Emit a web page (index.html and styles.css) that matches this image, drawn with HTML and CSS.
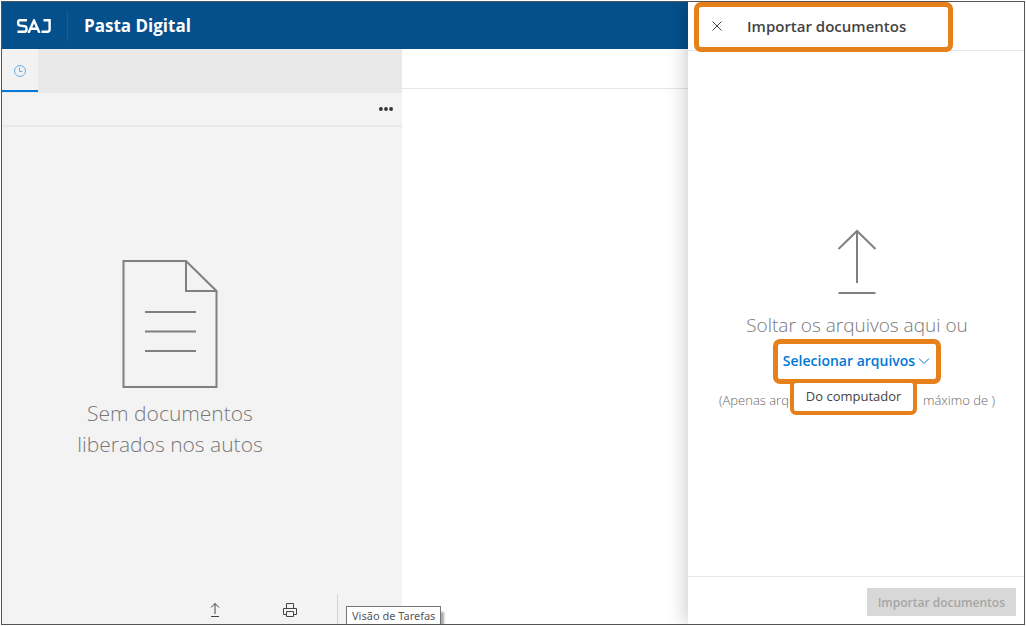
FILE: index.html
```html
<!DOCTYPE html>
<html lang="pt-BR">
<head>
<meta charset="utf-8">
<meta name="viewport" content="width=device-width, initial-scale=1">
<title>Pasta Digital</title>
<link rel="stylesheet" href="styles.css">
</head>
<body>
<div class="app">
  <div class="workspace">
    <header class="topbar">
      <svg class="logo" width="34" height="14" viewBox="0 0 34 14" role="img" aria-label="SAJ">
        <path d="M10 1.2H2.8Q1.2 1.2 1.2 3V4.6Q1.2 6.4 3 6.6L8 7.2Q9.5 7.4 9.5 9V10.8Q9.5 12.7 7.6 12.7H.5M11.5 14L17 1.5L22.5 14M14 9.7H20M26.5 1.2H32.6V10.5Q32.6 12.7 30.4 12.7H24.5"/>
      </svg>
      <h1 class="title">Pasta Digital</h1>
    </header>
    <div class="columns">
      <section class="sidebar">
        <nav class="tabs">
          <button class="tab" type="button" aria-label="Recentes">
            <svg width="14" height="14" viewBox="0 0 14 14"><circle cx="7" cy="7" r="5.500"/><path d="M6.500 3.500V7.500H9.500"/></svg>
          </button>
        </nav>
        <div class="toolbar">
          <button class="more" type="button" aria-label="Mais opções">
            <svg width="16" height="4" viewBox="0 0 16 4"><circle cx="2.900" cy="2" r="1.900"/><circle cx="8" cy="2" r="1.900"/><circle cx="13.100" cy="2" r="1.900"/></svg>
          </button>
        </div>
        <div class="empty">
          <svg width="96" height="128" viewBox="0 0 96 128"><path d="M64 1H1.500V127H94.500V31ZM64 1V31H95M23 52H74M23 71.500H74M23 91H74"/></svg>
          <p class="empty-text">Sem documentos<br>liberados nos autos</p>
        </div>
        <div class="actions">
          <button class="action" type="button" aria-label="Importar">
            <svg width="16" height="16" viewBox="0 0 16 16"><path d="M8 12V1.500M4 5.500L8 1.500L12 5.500M4 14.500H12"/></svg>
          </button>
          <button class="action" type="button" aria-label="Imprimir">
            <svg width="16" height="16" viewBox="0 0 16 16"><path d="M4.500 6.500V1.500H11.500V6.500M4.500 12.500H1.500V6.500H14.500V12.500H11.500M4.500 9.500H11.500V14.500H4.500Z"/></svg>
          </button>
          <div class="task-slot">
            <span class="tooltip" role="tooltip">Visão de Tarefas</span>
          </div>
        </div>
      </section>
      <main class="viewer"><div class="viewer-bar"></div></main>
    </div>
  </div>
  <aside class="panel">
    <header class="panel-head">
      <div class="panel-heading">
        <button class="close" type="button" aria-label="Fechar">
          <svg width="10" height="10" viewBox="0 0 10 10"><path d="M.5 .5L9.500 9.500M9.500 .5L.5 9.500"/></svg>
        </button>
        <h2 class="panel-title">Importar documentos</h2>
      </div>
    </header>
    <div class="dropzone">
      <svg class="upload" width="40" height="66" viewBox="0 0 40 66"><path d="M20 54V2M1.500 20L20 2L38.500 20M1.500 64H38.500"/></svg>
      <p class="drop-text">Soltar os arquivos aqui ou</p>
      <div class="picker">
        <button class="select" type="button" aria-haspopup="menu" aria-expanded="true">Selecionar arquivos
          <svg width="12" height="8" viewBox="0 0 12 8"><path d="M1 1.500L6 6.500L11 1.500"/></svg>
        </button>
        <div class="menu" role="menu"><button class="menu-item" type="button" role="menuitem">Do computador</button></div>
      </div>
      <p class="hint"><span>(Apenas arquivos</span><span>máximo de )</span></p>
    </div>
    <footer class="panel-foot"><button class="submit" type="button" disabled>Importar documentos</button></footer>
  </aside>
</div>
</body>
</html>
```
FILE: styles.css
```css
* { box-sizing: border-box; }
body {
  margin: 0;
  padding: 1px;
  background: #fff;
  font-family: "Open Sans", "Noto Sans", sans-serif;
  font-size: 13px;
  color: #444;
}
h1, h2, p { margin: 0; }
button { margin: 0; padding: 0; border: 0; background: none; font: inherit; color: inherit; }
svg { display: block; fill: none; stroke: currentColor; }
.app {
  display: flex;
  height: calc(100vh - 2px);
  border: 1px solid #555;
  overflow: hidden;
}
.workspace { flex: 1; min-width: 0; display: flex; flex-direction: column; }
.topbar { display: flex; align-items: center; height: 47px; background: #04508c; color: #fff; }
.logo { margin: 0 16px 0 15px; stroke-width: 2.4; }
.title {
  padding-left: 16px;
  border-left: 1px solid #0861a8;
  font-size: 17px;
  line-height: 30px;
  font-weight: 700;
}
.columns { flex: 1; display: flex; min-height: 0; }
.sidebar { flex: 0 0 400px; display: flex; flex-direction: column; background: #f3f3f3; }
.tabs { display: flex; height: 44px; padding-bottom: 1px; background: #e9e9e9; }
.tab {
  display: grid;
  place-items: center;
  width: 36px;
  padding-top: 2px;
  background: #f2f2f2;
  border-bottom: 2px solid #0078d7;
  color: #69aee5;
}
.toolbar {
  display: flex;
  align-items: center;
  justify-content: flex-end;
  height: 34px;
  padding-right: 8px;
  border-bottom: 2px solid #e9e9e9;
}
.more svg { fill: #333; stroke: none; }
.empty {
  flex: 1;
  display: flex;
  flex-direction: column;
  align-items: center;
  justify-content: center;
  gap: 10px;
  padding: 0 64px 2px 0;
  color: #808080;
}
.empty svg { stroke-width: 2; }
.empty-text { font-size: 21px; line-height: 31px; font-weight: 300; text-align: center; color: #777; }
.actions { display: flex; justify-content: flex-end; height: 30px; }
.action { display: grid; place-items: center; width: 75px; padding-top: 2px; }
.action + .action { margin-right: 10px; }
.task-slot { position: relative; width: 65px; border-left: 1px solid #d4d4d4; }
.tooltip {
  position: absolute;
  top: 12px;
  left: 8px;
  padding: 0 5px;
  border: 1px solid #767676;
  background: #fff;
  box-shadow: 3px 6px 2px #aaa;
  font-family: "Noto Sans", sans-serif;
  font-size: 11px;
  line-height: 18px;
  white-space: nowrap;
  color: #575757;
}
.viewer { flex: 1; }
.viewer-bar { height: 40px; border-bottom: 1px solid #e6e6e6; }
.panel {
  position: relative;
  flex: 0 0 336px;
  display: flex;
  flex-direction: column;
  background: #fff;
  box-shadow: 0 0 20px rgba(0, 0, 0, .25);
}
.panel-head { height: 49px; border-bottom: 1px solid #e6e6e6; }
.panel-heading {
  position: relative;
  display: flex;
  align-items: center;
  gap: 25px;
  width: 259px;
  height: 50px;
  margin-left: 6px;
  padding: 0 12px 3px 13px;
  border: 5px solid #e5801b;
  border-radius: 7px;
}
.close svg { stroke-width: 1; }
.panel-title { font-size: 15px; line-height: 24px; font-weight: 600; white-space: nowrap; }
.dropzone {
  flex: 1;
  display: flex;
  flex-direction: column;
  align-items: center;
  justify-content: center;
  padding: 11px 0 0 2px;
}
.upload { color: #808080; stroke-width: 2; }
.drop-text { margin-top: 16px; font-size: 19px; line-height: 28px; font-weight: 300; color: #777; }
.picker { position: relative; }
.select {
  display: flex;
  align-items: center;
  gap: 3px;
  height: 45px;
  padding: 0 6px 0 5px;
  border: 5px solid #e5801b;
  border-radius: 7px;
  background: #fff;
  color: #0078d7;
  font-size: 14px;
  font-weight: 600;
  line-height: 20px;
  white-space: nowrap;
}
.menu {
  position: absolute;
  top: 40px;
  left: 17px;
  border: 4px solid #e5801b;
  border-radius: 6px;
  background: #fff;
}
.menu-item { height: 28px; padding: 0 12px 2px; font-size: 13px; white-space: nowrap; }
.hint {
  display: flex;
  justify-content: space-between;
  width: 276px;
  margin-top: 6px;
  font-size: 13px;
  line-height: 20px;
  font-weight: 300;
  color: #666;
}
.panel-foot {
  display: flex;
  justify-content: flex-end;
  align-items: flex-start;
  height: 48px;
  padding: 11px 8px 0 0;
  border-top: 1px solid #e6e6e6;
}
.submit { height: 28px; padding: 0 11px; background: #d8d8d8; color: #a6a6a6; font-size: 12px; font-weight: 600; }
```
